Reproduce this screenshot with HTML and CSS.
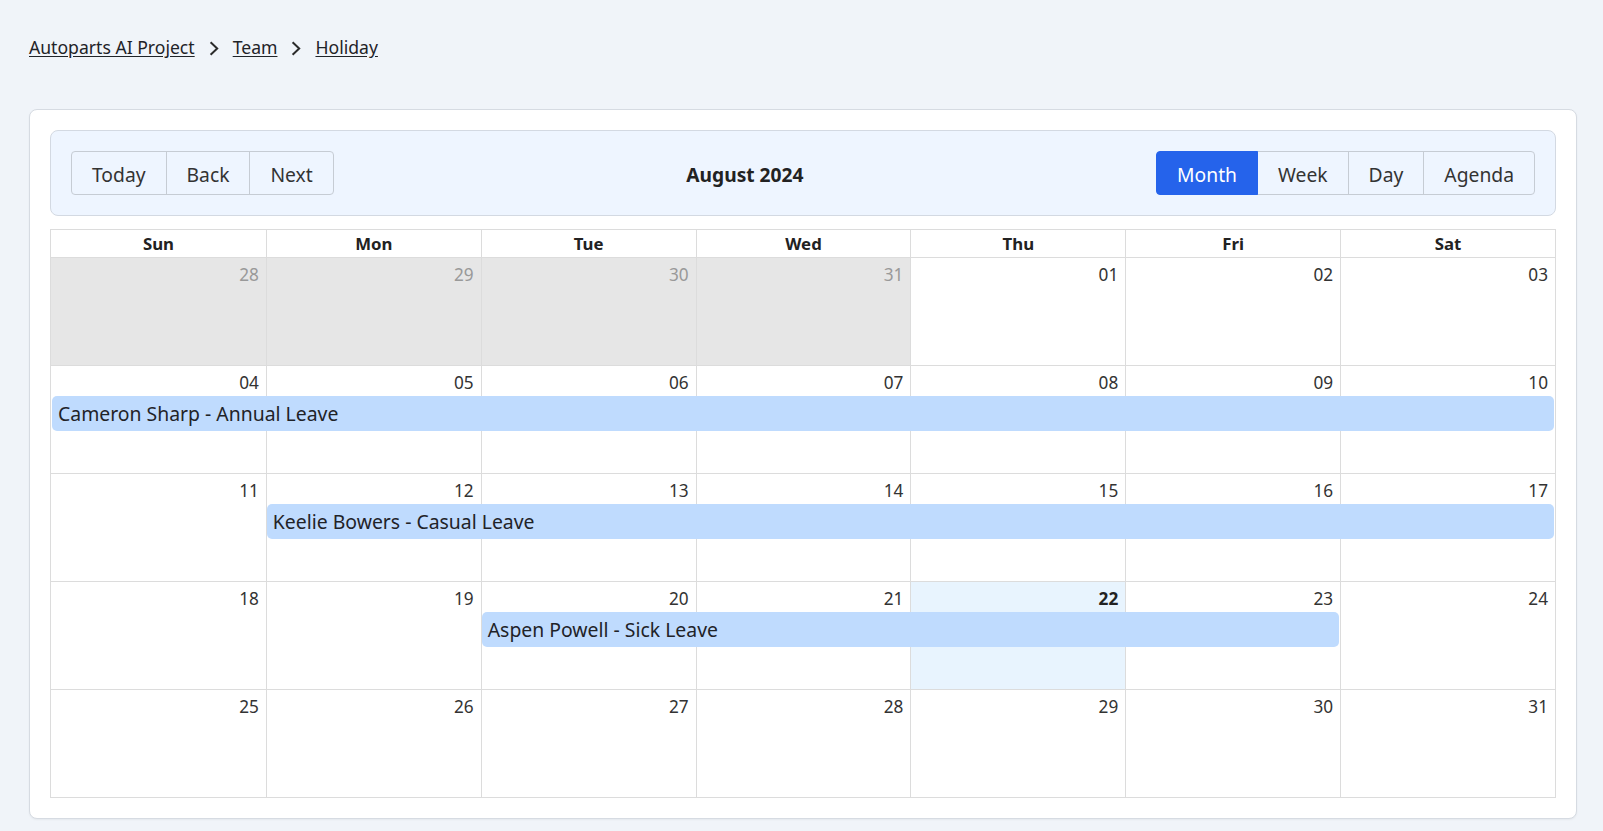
FILE: index.html
```html
<!DOCTYPE html>
<html lang="en">
<head>
<meta charset="utf-8">
<title>Holiday</title>
<link rel="stylesheet" href="styles.css">
</head>
<body>
<div class="page">
  <nav class="crumbs">
    <a href="#">Autoparts AI Project</a>
    <svg class="chev" viewBox="0 0 10 15" width="10" height="15"><path d="M1.6 1.2 L8.2 7.5 L1.6 13.8" fill="none" stroke="#2b2b2b" stroke-width="2"/></svg>
    <a href="#">Team</a>
    <svg class="chev" viewBox="0 0 10 15" width="10" height="15"><path d="M1.6 1.2 L8.2 7.5 L1.6 13.8" fill="none" stroke="#2b2b2b" stroke-width="2"/></svg>
    <a href="#">Holiday</a>
  </nav>

  <section class="card">
    <div class="toolbar">
      <div class="btn-group">
        <button class="btn">Today</button>
        <button class="btn">Back</button>
        <button class="btn">Next</button>
      </div>
      <div class="label">August 2024</div>
      <div class="btn-group">
        <button class="btn active">Month</button>
        <button class="btn">Week</button>
        <button class="btn">Day</button>
        <button class="btn">Agenda</button>
      </div>
    </div>

    <div class="month">
      <div class="head">
        <div class="hcell">Sun</div>
        <div class="hcell">Mon</div>
        <div class="hcell">Tue</div>
        <div class="hcell">Wed</div>
        <div class="hcell">Thu</div>
        <div class="hcell">Fri</div>
        <div class="hcell">Sat</div>
      </div>

      <div class="week">
        <div class="bg c1 off"></div><div class="bg c2 off"></div><div class="bg c3 off"></div><div class="bg c4 off"></div><div class="bg c5"></div><div class="bg c6"></div><div class="bg c7"></div>
        <div class="date c1 dim">28</div><div class="date c2 dim">29</div><div class="date c3 dim">30</div><div class="date c4 dim">31</div><div class="date c5">01</div><div class="date c6">02</div><div class="date c7">03</div>
      </div>

      <div class="week">
        <div class="bg c1"></div><div class="bg c2"></div><div class="bg c3"></div><div class="bg c4"></div><div class="bg c5"></div><div class="bg c6"></div><div class="bg c7"></div>
        <div class="date c1">04</div><div class="date c2">05</div><div class="date c3">06</div><div class="date c4">07</div><div class="date c5">08</div><div class="date c6">09</div><div class="date c7">10</div>
        <div class="event span-1-8">Cameron Sharp - Annual Leave</div>
      </div>

      <div class="week">
        <div class="bg c1"></div><div class="bg c2"></div><div class="bg c3"></div><div class="bg c4"></div><div class="bg c5"></div><div class="bg c6"></div><div class="bg c7"></div>
        <div class="date c1">11</div><div class="date c2">12</div><div class="date c3">13</div><div class="date c4">14</div><div class="date c5">15</div><div class="date c6">16</div><div class="date c7">17</div>
        <div class="event span-2-8">Keelie Bowers - Casual Leave</div>
      </div>

      <div class="week">
        <div class="bg c1"></div><div class="bg c2"></div><div class="bg c3"></div><div class="bg c4"></div><div class="bg c5 today"></div><div class="bg c6"></div><div class="bg c7"></div>
        <div class="date c1">18</div><div class="date c2">19</div><div class="date c3">20</div><div class="date c4">21</div><div class="date c5 now">22</div><div class="date c6">23</div><div class="date c7">24</div>
        <div class="event span-3-7">Aspen Powell - Sick Leave</div>
      </div>

      <div class="week">
        <div class="bg c1"></div><div class="bg c2"></div><div class="bg c3"></div><div class="bg c4"></div><div class="bg c5"></div><div class="bg c6"></div><div class="bg c7"></div>
        <div class="date c1">25</div><div class="date c2">26</div><div class="date c3">27</div><div class="date c4">28</div><div class="date c5">29</div><div class="date c6">30</div><div class="date c7">31</div>
      </div>
    </div>
  </section>
</div>
</body>
</html>
```

FILE: styles.css
```css
* { box-sizing: border-box; }

html, body {
  margin: 0;
  padding: 0;
  background: #f0f4f9;
  font-family: "Noto Sans", "Open Sans", sans-serif;
  color: #222;
}

.page {
  padding: 35px 26px 13px 29px;
}

.crumbs {
  display: flex;
  align-items: center;
  gap: 14px;
  height: 24px;
  font-size: 17.6px;
  line-height: 24px;
}

.crumbs a {
  color: #1f2328;
  text-decoration: underline;
  text-underline-offset: 2px;
}

.chev {
  display: block;
  margin-top: 2px;
}

.card {
  margin-top: 50px;
  background: #fff;
  border: 1px solid #d6dbe2;
  border-radius: 8px;
  padding: 20px;
  box-shadow: 0 1px 2px rgba(0, 0, 0, 0.05);
}

.toolbar {
  display: flex;
  align-items: center;
  background: #eef5ff;
  border: 1px solid #d3d9e2;
  border-radius: 8px;
  padding: 20px;
  margin-bottom: 13px;
}

.label {
  flex: 1;
  text-align: center;
  font-weight: 700;
  font-size: 19.2px;
  line-height: 26px;
  padding-top: 4px;
  color: #222;
}

.btn-group {
  display: flex;
}

.btn {
  font-family: inherit;
  font-size: 19.3px;
  line-height: 26px;
  padding: 10px 20px 6px 20px;
  margin: 0;
  background: transparent;
  color: #333;
  border: 1px solid #c6ccd4;
  border-radius: 0;
}

.btn + .btn {
  margin-left: -1px;
}

.btn:first-child {
  border-radius: 4px 0 0 4px;
}

.btn:last-child {
  border-radius: 0 4px 4px 0;
}

.btn.active {
  background: #2563eb;
  border-color: #2563eb;
  color: #fff;
  position: relative;
}

.month {
  border: 1px solid #dcdcdc;
}

.head {
  display: grid;
  grid-template-columns: repeat(7, 1fr);
  height: 28px;
  border-bottom: 1px solid #dcdcdc;
}

.hcell {
  text-align: center;
  font-weight: 700;
  font-size: 16.8px;
  line-height: 27px;
  color: #222;
}

.hcell + .hcell {
  border-left: 1px solid #dcdcdc;
}

.week {
  display: grid;
  grid-template-columns: repeat(7, 1fr);
  grid-template-rows: 30px 35px 1fr;
  height: 108px;
  border-bottom: 1px solid #dcdcdc;
}

.week:last-child {
  border-bottom: none;
  height: 107px;
}

.bg {
  grid-row: 1 / -1;
}

.bg + .bg {
  border-left: 1px solid #dcdcdc;
}

.bg.off {
  background: #e6e6e6;
}

.bg.today {
  background: #e8f4fe;
}

.c1 { grid-column: 1; }
.c2 { grid-column: 2; }
.c3 { grid-column: 3; }
.c4 { grid-column: 4; }
.c5 { grid-column: 5; }
.c6 { grid-column: 6; }
.c7 { grid-column: 7; }

.date {
  grid-row: 1;
  text-align: right;
  font-size: 17.2px;
  line-height: 23px;
  padding: 5px 7px 0 0;
  color: #333;
}

.date.dim {
  color: #999;
}

.date.now {
  font-weight: 700;
  color: #222;
}

.event {
  grid-row: 2;
  margin: 0 1px;
  background: #bfdbfe;
  border-radius: 5px;
  padding: 1px 6px 0 6px;
  font-size: 19.4px;
  line-height: 34px;
  color: #1f2328;
  white-space: nowrap;
  overflow: hidden;
}

.span-1-8 { grid-column: 1 / 8; }
.span-2-8 { grid-column: 2 / 8; }
.span-3-7 { grid-column: 3 / 7; }
```
